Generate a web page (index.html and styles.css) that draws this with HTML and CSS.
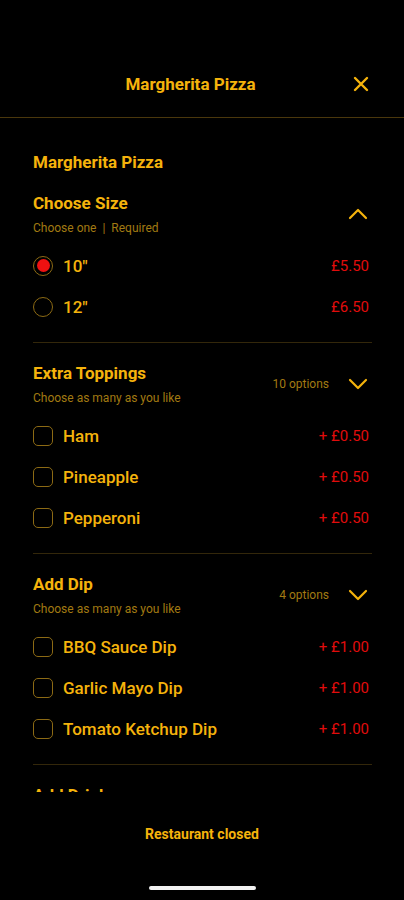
FILE: index.html
```html
<!DOCTYPE html>
<html>

<head>
  <meta charset="UTF-8" />
  <title>Margherita Pizza</title>
  <link rel="stylesheet" href="styles.css">
</head>

<body>
  <div class="sheet">
    <div class="status-bar"></div>

    <div class="header">
      <h1 class="header-title">Margherita Pizza</h1>
      <button class="close-button" aria-label="Close">
        <svg width="16" height="16" viewBox="0 0 16 16">
          <path d="M2 2 L14 14 M14 2 L2 14" stroke="#f5b30c" stroke-width="2.4" stroke-linecap="round" fill="none" />
        </svg>
      </button>
    </div>

    <div class="content">
      <h2 class="item-title">Margherita Pizza</h2>

      <!-- Size -->
      <div class="group">
        <div class="group-head">
          <div class="group-text">
            <h3 class="group-title">Choose Size</h3>
            <p class="group-sub">Choose one &nbsp;|&nbsp; Required</p>
          </div>
          <div class="group-side">
            <svg class="chevron" width="24" height="24" viewBox="0 0 24 24">
              <path d="M4 16 L12 8 L20 16" stroke="#f5b30c" stroke-width="2.2" stroke-linecap="round" stroke-linejoin="round" fill="none" />
            </svg>
          </div>
        </div>
        <div class="option">
          <span class="radio checked"></span>
          <span class="option-name">10"</span>
          <span class="option-price">£5.50</span>
        </div>
        <div class="option">
          <span class="radio"></span>
          <span class="option-name">12"</span>
          <span class="option-price">£6.50</span>
        </div>
      </div>

      <!-- Toppings -->
      <div class="group">
        <div class="group-head">
          <div class="group-text">
            <h3 class="group-title">Extra Toppings</h3>
            <p class="group-sub">Choose as many as you like</p>
          </div>
          <div class="group-side">
            <span class="option-count">10 options</span>
            <svg class="chevron" width="24" height="24" viewBox="0 0 24 24">
              <path d="M4 8 L12 16 L20 8" stroke="#f5b30c" stroke-width="2.2" stroke-linecap="round" stroke-linejoin="round" fill="none" />
            </svg>
          </div>
        </div>
        <div class="option">
          <span class="checkbox"></span>
          <span class="option-name">Ham</span>
          <span class="option-price">+ £0.50</span>
        </div>
        <div class="option">
          <span class="checkbox"></span>
          <span class="option-name">Pineapple</span>
          <span class="option-price">+ £0.50</span>
        </div>
        <div class="option">
          <span class="checkbox"></span>
          <span class="option-name">Pepperoni</span>
          <span class="option-price">+ £0.50</span>
        </div>
      </div>

      <!-- Dips -->
      <div class="group">
        <div class="group-head">
          <div class="group-text">
            <h3 class="group-title">Add Dip</h3>
            <p class="group-sub">Choose as many as you like</p>
          </div>
          <div class="group-side">
            <span class="option-count">4 options</span>
            <svg class="chevron" width="24" height="24" viewBox="0 0 24 24">
              <path d="M4 8 L12 16 L20 8" stroke="#f5b30c" stroke-width="2.2" stroke-linecap="round" stroke-linejoin="round" fill="none" />
            </svg>
          </div>
        </div>
        <div class="option">
          <span class="checkbox"></span>
          <span class="option-name">BBQ Sauce Dip</span>
          <span class="option-price">+ £1.00</span>
        </div>
        <div class="option">
          <span class="checkbox"></span>
          <span class="option-name">Garlic Mayo Dip</span>
          <span class="option-price">+ £1.00</span>
        </div>
        <div class="option">
          <span class="checkbox"></span>
          <span class="option-name">Tomato Ketchup Dip</span>
          <span class="option-price">+ £1.00</span>
        </div>
      </div>

      <!-- Drinks, cut off by the scroll area -->
      <div class="group">
        <h3 class="group-title">Add Drink</h3>
      </div>
    </div>

    <div class="footer">
      <p class="closed-note">Restaurant closed</p>
      <div class="home-indicator"></div>
    </div>
  </div>
</body>

</html>
```

FILE: styles.css
```css
/* Reset default margin and padding */
* {
  margin: 0;
  padding: 0;
  box-sizing: border-box;
}

body {
  background-color: #000;
  color: #f5b30c;
  font-family: Roboto, "Liberation Sans", sans-serif;
}

.sheet {
  display: flex;
  flex-direction: column;
  height: 900px;
  overflow: hidden;
}

.status-bar {
  height: 50px;
}

/* Header */
.header {
  display: flex;
  align-items: center;
  height: 68px;
  padding: 0 23px 0 40px;
  border-bottom: 1px solid #4a370c;
}

.header-title {
  flex: 1;
  text-align: center;
  font-size: 17px;
  font-weight: 700;
}

.close-button {
  width: 40px;
  height: 40px;
  display: flex;
  align-items: center;
  justify-content: center;
  background: transparent;
  border: none;
}

/* Scroll area */
.content {
  height: 674px;
  overflow: hidden;
  padding: 33px 32px 0 33px;
}

.item-title {
  font-size: 17px;
  font-weight: 700;
  line-height: 22px;
  margin-bottom: 19px;
}

.group {
  padding-bottom: 15px;
  border-bottom: 1px solid #33270a;
}

.group + .group {
  padding-top: 19px;
}

.group-head {
  display: flex;
  align-items: center;
  margin-bottom: 9px;
}

.group-text {
  flex: 1;
}

.group-title {
  font-size: 17px;
  font-weight: 700;
  line-height: 22px;
}

.group-sub {
  margin-top: 6px;
  font-size: 12px;
  line-height: 16px;
  color: #a27a12;
}

.group-side {
  display: flex;
  align-items: center;
  gap: 17px;
  margin-right: 2px;
}

.option-count {
  font-size: 12px;
  color: #a27a12;
}

/* Option rows */
.option {
  display: flex;
  align-items: center;
  height: 41px;
  padding-right: 3px;
}

.radio,
.checkbox {
  width: 20px;
  height: 20px;
  border: 1.5px solid #8c6a14;
  margin-right: 10px;
  display: flex;
  align-items: center;
  justify-content: center;
}

.radio {
  border-radius: 50%;
}

.radio.checked::after {
  content: "";
  width: 13px;
  height: 13px;
  border-radius: 50%;
  background-color: #ee1111;
}

.checkbox {
  border-radius: 5px;
}

.option-name {
  flex: 1;
  font-size: 17px;
  font-weight: 500;
}

.option-price {
  font-size: 15px;
  color: #e10c0c;
}

/* Footer */
.footer {
  flex: 1;
  display: flex;
  flex-direction: column;
  align-items: center;
  padding-top: 34px;
}

.closed-note {
  font-size: 14px;
  font-weight: 700;
  line-height: 16px;
}

.home-indicator {
  margin-top: 44px;
  width: 107px;
  height: 4px;
  border-radius: 2px;
  background-color: #f2f2f2;
}
```
